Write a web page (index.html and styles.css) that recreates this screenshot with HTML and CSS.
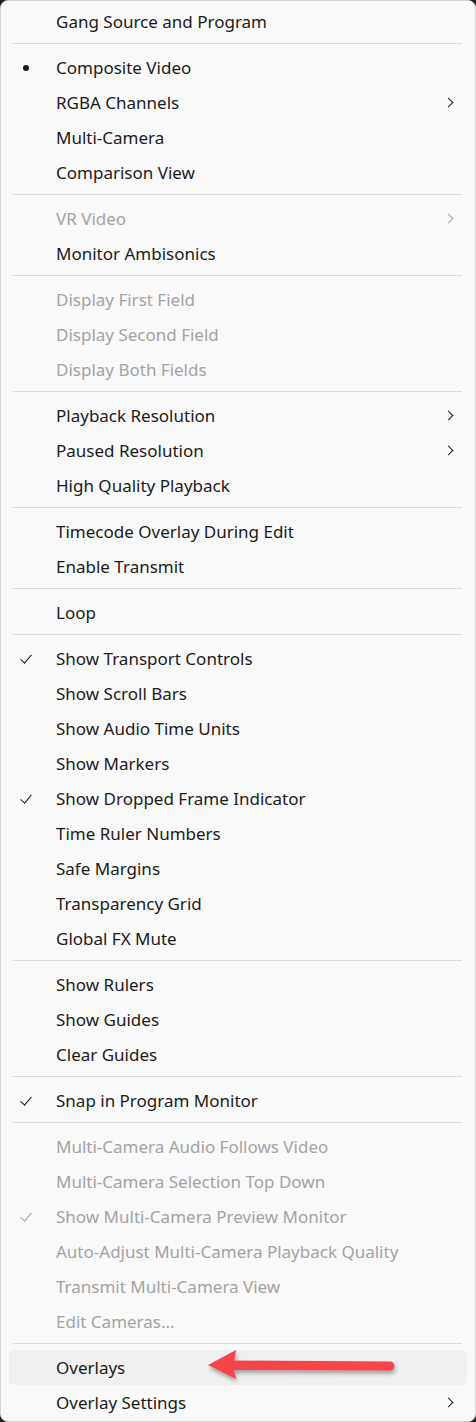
FILE: index.html
```html
<!DOCTYPE html>
<html lang="en">
<head>
    <meta charset="UTF-8">
    <title>Program Monitor Menu</title>
    <link rel="stylesheet" href="styles.css">
</head>
<body>
    <div class="menu">
        <div class="item">Gang Source and Program</div>
        <div class="sep"></div>

        <div class="item bullet">Composite Video</div>
        <div class="item sub">RGBA Channels</div>
        <div class="item">Multi-Camera</div>
        <div class="item">Comparison View</div>
        <div class="sep"></div>

        <div class="item sub disabled">VR Video</div>
        <div class="item">Monitor Ambisonics</div>
        <div class="sep"></div>

        <div class="item disabled">Display First Field</div>
        <div class="item disabled">Display Second Field</div>
        <div class="item disabled">Display Both Fields</div>
        <div class="sep"></div>

        <div class="item sub">Playback Resolution</div>
        <div class="item sub">Paused Resolution</div>
        <div class="item">High Quality Playback</div>
        <div class="sep"></div>

        <div class="item">Timecode Overlay During Edit</div>
        <div class="item">Enable Transmit</div>
        <div class="sep"></div>

        <div class="item">Loop</div>
        <div class="sep"></div>

        <div class="item check">Show Transport Controls</div>
        <div class="item">Show Scroll Bars</div>
        <div class="item">Show Audio Time Units</div>
        <div class="item">Show Markers</div>
        <div class="item check">Show Dropped Frame Indicator</div>
        <div class="item">Time Ruler Numbers</div>
        <div class="item">Safe Margins</div>
        <div class="item">Transparency Grid</div>
        <div class="item">Global FX Mute</div>
        <div class="sep"></div>

        <div class="item">Show Rulers</div>
        <div class="item">Show Guides</div>
        <div class="item">Clear Guides</div>
        <div class="sep"></div>

        <div class="item check">Snap in Program Monitor</div>
        <div class="sep"></div>

        <div class="item disabled">Multi-Camera Audio Follows Video</div>
        <div class="item disabled">Multi-Camera Selection Top Down</div>
        <div class="item check disabled">Show Multi-Camera Preview Monitor</div>
        <div class="item disabled">Auto-Adjust Multi-Camera Playback Quality</div>
        <div class="item disabled">Transmit Multi-Camera View</div>
        <div class="item disabled">Edit Cameras...</div>
        <div class="sep"></div>

        <div class="item hover">
            Overlays
            <svg class="arrow" width="200" height="44" viewBox="0 0 200 44">
                <defs>
                    <filter id="shadow" x="-10%" y="-30%" width="120%" height="160%">
                        <feDropShadow dx="1" dy="3" stdDeviation="2" flood-color="#000" flood-opacity="0.35"/>
                    </filter>
                </defs>
                <g filter="url(#shadow)" fill="#f5454a">
                    <polygon points="4,21 32,6 30,18 30,26 32,35"/>
                    <path d="M28 16.5 L186 17.5 A4.5 4.5 0 0 1 186 26.5 L28 26 Z"/>
                </g>
            </svg>
        </div>
        <div class="item sub">Overlay Settings</div>
    </div>
</body>
</html>
```

FILE: styles.css
```css
* {
    margin: 0;
    padding: 0;
    box-sizing: border-box;
}

body {
    background: #202020;
    width: 476px;
    height: 1422px;
    font-family: 'Noto Sans', 'Open Sans', sans-serif;
}

.menu {
    height: 1422px;
    background: #f9f9f9;
    border: 1px solid #d4d4d4;
    border-radius: 8px;
    padding: 3px 8px 0 8px;
    overflow: hidden;
}

.item {
    position: relative;
    height: 35px;
    line-height: 35px;
    padding-left: 47px;
    font-size: 17px;
    color: #1b1b1b;
    white-space: nowrap;
}

.item.disabled {
    color: #a3a3a3;
}

.item.hover {
    background: #f0f0f0;
    border-radius: 5px;
}

.sep {
    height: 11px;
    padding: 4px 5px 0 4px;
}

.sep::before {
    content: '';
    display: block;
    height: 1px;
    background: #dadada;
}

.item.bullet::before {
    content: '';
    position: absolute;
    left: 14px;
    top: 15px;
    width: 6px;
    height: 6px;
    border-radius: 50%;
    background: #1b1b1b;
}

.item.check::before {
    content: '';
    position: absolute;
    left: 14px;
    top: 11px;
    width: 5px;
    height: 10px;
    border-right: 1.3px solid #1b1b1b;
    border-bottom: 1.3px solid #1b1b1b;
    transform: rotate(40deg);
    transform-origin: center;
}

.item.check.disabled::before {
    border-color: #a3a3a3;
}

.item.sub::after {
    content: '';
    position: absolute;
    right: 15px;
    top: 14px;
    width: 6px;
    height: 6px;
    border-right: 1.4px solid #1b1b1b;
    border-top: 1.4px solid #1b1b1b;
    transform: rotate(45deg);
}

.item.sub.disabled::after {
    border-color: #a3a3a3;
}

.arrow {
    position: absolute;
    left: 195px;
    top: -6px;
}
```
